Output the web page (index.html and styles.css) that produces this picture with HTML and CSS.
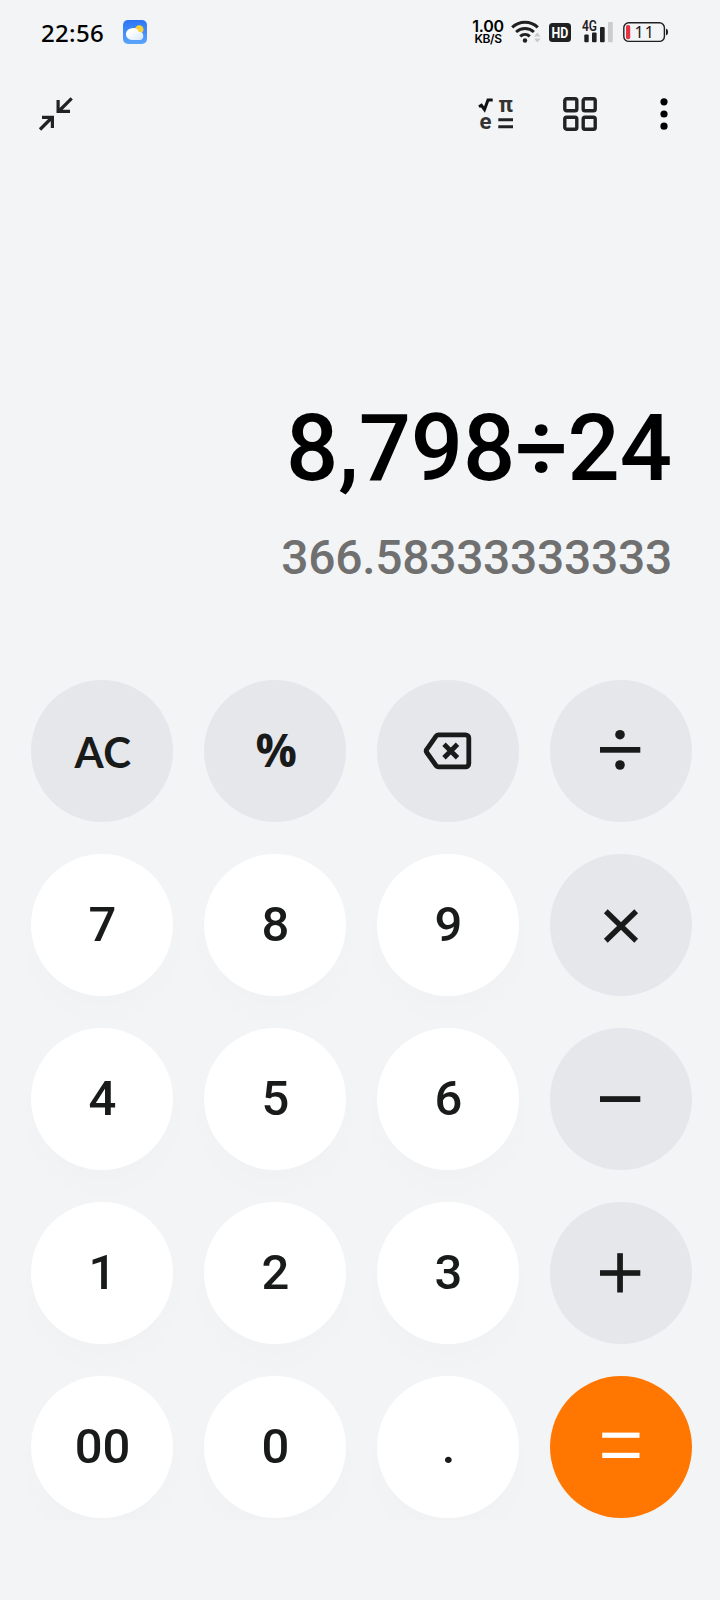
FILE: index.html
```html
<!DOCTYPE html>
<html lang="en">
<head>
    <meta charset="UTF-8">
    <title>Calculator</title>
    <link rel="stylesheet" href="styles.css">
</head>
<body>
    <div class="status-bar">
        <span class="time">22:56</span>
        <svg class="weather" width="24" height="24" viewBox="0 0 24 24">
            <defs>
                <linearGradient id="sky" x1="0" y1="0" x2="0" y2="1">
                    <stop offset="0" stop-color="#2d74f5"/>
                    <stop offset="1" stop-color="#5ba5fa"/>
                </linearGradient>
                <linearGradient id="cloud" x1="0" y1="0" x2="1" y2="1">
                    <stop offset="0.3" stop-color="#ffffff"/>
                    <stop offset="1" stop-color="#d5e6fb"/>
                </linearGradient>
            </defs>
            <rect width="24" height="24" rx="5" fill="url(#sky)"/>
            <circle cx="16.3" cy="9.5" r="4.2" fill="#fbd137"/>
            <path d="M9 20a5.800 5.800 0 0 1-1.300-11.500 6 6 0 0 1 8.300 3.500 4 4 0 1 1 .5 8z" fill="url(#cloud)"/>
        </svg>
        <div class="speed">
            <span class="speed-value">1.00</span>
            <span class="speed-unit">KB/S</span>
        </div>
        <svg class="wifi" width="32" height="24" viewBox="0 0 32 24">
            <g fill="none" stroke="#1f2022" stroke-width="3">
                <path d="M1.200 7.300a18.600 18.600 0 0 1 25.600 0"/>
                <path d="M5.100 12a13 13 0 0 1 17.800 0"/>
                <path d="M9.200 16.400a7.200 7.200 0 0 1 9.600 0"/>
            </g>
            <circle cx="14" cy="20.500" r="2.200" fill="#1f2022"/>
            <path d="M23 16.500l3.300-4 3.300 4zM23 18.500h6.600l-3.300 4z" fill="#c8c9cb"/>
        </svg>
        <svg class="hd" width="22" height="19" viewBox="0 0 22 19">
            <rect width="22" height="19" rx="3.500" fill="#1f2022"/>
            <text x="2.600" y="14.800" class="hd-text" textLength="16.800" lengthAdjust="spacingAndGlyphs">HD</text>
        </svg>
        <svg class="signal" width="32" height="24" viewBox="0 0 32 24">
            <text x="0" y="11" class="signal-text" textLength="15" lengthAdjust="spacingAndGlyphs">4G</text>
            <rect x="2.300" y="14.500" width="4.400" height="7.700" rx="1" fill="#1f2022"/>
            <rect x="10" y="12.500" width="4.600" height="9.700" rx="1" fill="#1f2022"/>
            <rect x="18" y="7" width="4.700" height="15.200" rx="1" fill="#1f2022"/>
            <rect x="26" y="2" width="4.800" height="20.200" rx="1" fill="#cbccce"/>
        </svg>
        <svg class="battery" width="46" height="22" viewBox="0 0 46 22">
            <rect x="0.8" y="1.800" width="40.600" height="18.600" rx="5" fill="none" stroke="#1f2022" stroke-width="1.400"/>
            <path d="M43 7.700c1.500.3 2 1.300 2 3.300s-.5 3-2 3.300z" fill="#1f2022"/>
            <rect x="3" y="4" width="4.200" height="14.200" rx="1.800" fill="#e23445"/>
            <text x="11.500" y="17" class="battery-text" textLength="19.500">11</text>
        </svg>
    </div>

    <div class="toolbar">
        <svg class="collapse" width="36" height="36" viewBox="0 0 36 36" fill="none" stroke="#222" stroke-width="3.200">
            <path d="M33.700 2.300L21.500 14.500M20.100 4v11.300H32"/>
            <path d="M2 33.500L14 21.500M4 21.400H14.400V32"/>
        </svg>
        <svg class="science" width="36" height="36" viewBox="0 0 36 36">
            <path d="M1 10.800l2.400-1.500 3.100 4.300L10 4h4.700" fill="none" stroke="#111" stroke-width="3"/>
            <text x="20.500" y="15.600" class="formula" textLength="14.500" lengthAdjust="spacingAndGlyphs">π</text>
            <text x="1.500" y="33.300" class="formula" textLength="12" lengthAdjust="spacingAndGlyphs">e</text>
            <path d="M20.300 23.700H35M20.300 30.800H35" fill="none" stroke="#222" stroke-width="3"/>
        </svg>
        <svg class="grid-icon" width="36" height="36" viewBox="0 0 36 36" fill="none" stroke="#222" stroke-width="3.400">
            <rect x="2.800" y="2.800" width="12" height="12" rx="1.800"/>
            <rect x="21.200" y="2.800" width="12" height="12" rx="1.800"/>
            <rect x="2.800" y="21.200" width="12" height="12" rx="1.800"/>
            <rect x="21.200" y="21.200" width="12" height="12" rx="1.800"/>
        </svg>
        <svg class="more" width="10" height="36" viewBox="0 0 10 36">
            <circle cx="5" cy="5.800" r="3.600"/>
            <circle cx="5" cy="18" r="3.600"/>
            <circle cx="5" cy="30.200" r="3.600"/>
        </svg>
    </div>

    <div class="display">
        <div class="expression">8,798÷24</div>
        <div class="result">366.58333333333</div>
    </div>

    <div class="keypad">
        <div class="key fn ac">AC</div>
        <div class="key fn percent">%</div>
        <div class="key fn">
            <svg width="142" height="142" viewBox="0 0 142 142" fill="none" stroke="#191a1a" stroke-width="4.800">
                <path d="M61.500 54.800H88.500a3.300 3.300 0 0 1 3.300 3.300V83.600a3.300 3.300 0 0 1-3.300 3.300H61.500a3 3 0 0 1-2.300-1.100L49.800 72.500a2.600 2.600 0 0 1 0-3.200L59.200 55.900a3 3 0 0 1 2.300-1.100z"/>
                <path d="M67 64.300L80.500 77.800M80.500 64.300L67 77.800"/>
            </svg>
        </div>
        <div class="key fn">
            <svg width="142" height="142" viewBox="0 0 142 142" fill="#191a1a">
                <rect x="50" y="67" width="40.300" height="5.700"/>
                <circle cx="70" cy="54.700" r="4.800"/>
                <circle cx="70" cy="85" r="4.800"/>
            </svg>
        </div>

        <div class="key">7</div>
        <div class="key">8</div>
        <div class="key">9</div>
        <div class="key fn">
            <svg width="142" height="142" viewBox="0 0 142 142" fill="none" stroke="#191a1a" stroke-width="5.400">
                <path d="M55.800 57.200L86.200 86.800M86.200 57.200L55.800 86.800"/>
            </svg>
        </div>

        <div class="key">4</div>
        <div class="key">5</div>
        <div class="key">6</div>
        <div class="key fn">
            <svg width="142" height="142" viewBox="0 0 142 142" fill="#191a1a">
                <rect x="50" y="68.200" width="40.300" height="5.800"/>
            </svg>
        </div>

        <div class="key">1</div>
        <div class="key">2</div>
        <div class="key">3</div>
        <div class="key fn">
            <svg width="142" height="142" viewBox="0 0 142 142" fill="#191a1a">
                <rect x="50" y="68.200" width="40.300" height="5.600"/>
                <rect x="67.200" y="51.200" width="5.700" height="39.300"/>
            </svg>
        </div>

        <div class="key">00</div>
        <div class="key">0</div>
        <div class="key">.</div>
        <div class="key fn equals">
            <svg width="142" height="142" viewBox="0 0 142 142" fill="#fff">
                <rect x="52.200" y="56.600" width="37.300" height="5.200"/>
                <rect x="52.200" y="76.800" width="37.300" height="5.200"/>
            </svg>
        </div>
    </div>
</body>
</html>
```
FILE: styles.css
```css
* { box-sizing: border-box; }
body {
    margin: 0; width: 720px; height: 1600px; overflow: hidden;
    background: #f2f4f6; color: #000;
    font-family: Roboto, "Liberation Sans", sans-serif;
}
svg { display: block; flex: none; overflow: visible; }

.status-bar { display: flex; align-items: center; height: 64px; padding-left: 41px; }
.time {
    width: 82px; padding-top: 1px; font-family: "Noto Sans", sans-serif; font-size: 24px;
    font-weight: 500; line-height: 24px; letter-spacing: 0.3px; white-space: nowrap;
}
.speed {
    display: flex; flex-direction: column; align-items: center;
    width: 32px; margin-left: 325px;
    font-family: Inter, sans-serif; font-weight: 600; white-space: nowrap;
}
.speed-value { font-size: 16px; line-height: 13px; letter-spacing: -0.3px; }
.speed-unit { font-size: 12px; line-height: 12px; letter-spacing: -0.4px; }
.wifi { margin-left: 7px; }
.hd { margin: 1px 0 0 6px; }
.hd-text { font-size: 15.5px; font-weight: 700; fill: #fff; }
.signal { margin-left: 11px; }
.signal-text { font-size: 14px; font-weight: 600; fill: #1f2022; }
.battery { margin-left: 9px; }
.battery-text { font-family: "Noto Sans", sans-serif; font-size: 16px; fill: #1f2022; }

.toolbar { display: flex; align-items: center; height: 100px; padding: 0 51px 0 38px; }
.science { margin-left: auto; }
.grid-icon { margin-left: 48px; }
.more { margin-left: 61px; }
.formula { font-size: 22px; font-weight: 700; fill: #333; }

.display {
    display: flex; flex-direction: column; align-items: flex-end;
    height: 516px; padding: 231px 48px 0 0; font-weight: 500;
}
.expression { font-size: 92px; line-height: 108px; letter-spacing: -0.1px; }
.result { margin-top: 27px; font-size: 48px; line-height: 56px; letter-spacing: -0.3px; color: #707070; }

.keypad {
    display: grid; grid-template-columns: repeat(4, 142px); gap: 32px 31px;
    padding: 0 27px 2px 31px; overflow: hidden;
}
.key {
    display: flex; align-items: center; justify-content: center;
    height: 142px; padding: 0 0 2px 1px;
    border-radius: 50%; background: #fff; color: #191a1a;
    font-size: 49px; font-weight: 500;
    box-shadow: 0 20px 36px rgba(0, 0, 0, 0.012);
}
.fn { padding: 0; background: #e5e7eb; box-shadow: none; }
.equals { background: #ff7700; }
.ac { padding: 1px 0 0 2px; font-family: Lato, sans-serif; font-size: 42px; font-weight: 700; letter-spacing: 0.5px; }
.percent { padding: 0 0 4px 2px; font-family: "Open Sans", sans-serif; font-size: 46px; font-weight: 700; letter-spacing: -0.5px; }
```
